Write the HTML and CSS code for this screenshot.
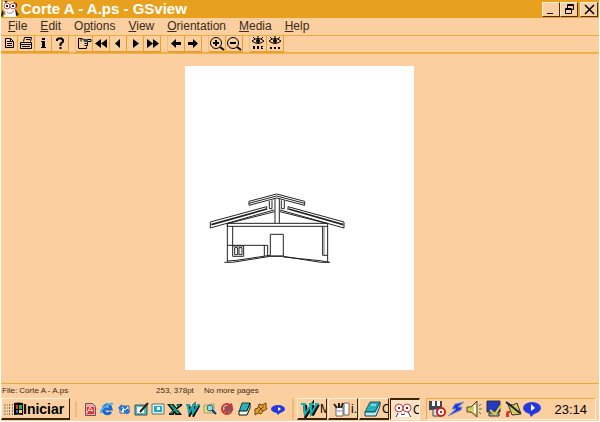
FILE: index.html
```
<!DOCTYPE html>
<html lang="pt">
<head>
  <meta charset="UTF-8">
  <title>Corte A - A.ps - GSview</title>
  <link rel="stylesheet" href="styles.css">
</head>
<body>

<div class="window">
  <header class="titlebar">
    <svg class="logo" viewBox="0 0 18 18">
      <path d="M2 1h4l3 1 4-1 2 3v6l2 4-2 3H3l1-5-2-4z" fill="#fff"/>
      <path d="M1 10l2 3-2 4-1-1zM14 8l4 7-3 1zM3 1h4L5 3zM12 1l4 3v4z" fill="#222"/>
      <circle cx="6" cy="6" r="3" fill="#fff" stroke="#d9533c"/>
      <circle cx="12" cy="6" r="3" fill="#fff" stroke="#d9533c"/>
      <path d="M5 5h2v2H5zM11 5h2v2h-2z" fill="#222"/>
      <path d="M6 12q3 3 7-1M4 11v4" fill="none" stroke="#b77"/>
    </svg>
    <h1>Corte A - A.ps - GSview</h1>
    <div class="controls">
      <button aria-label="Minimizar"><svg viewBox="0 0 16 13"><path d="M4 10.500h6" stroke="#000"/></svg></button>
      <button aria-label="Restaurar"><svg viewBox="0 0 16 13"><path d="M6.500 5V1.500h6v5H10M6 2.500h7M4.500 5.500h6v5h-6zM4 6.500h7" fill="none" stroke="#000"/></svg></button>
      <button class="close" aria-label="Fechar"><svg viewBox="0 0 16 13"><path d="M4 2l9 9M13 2l-9 9" stroke="#000" stroke-width="1.500"/></svg></button>
    </div>
  </header>

  <nav class="menu">
    <button><u>F</u>ile</button>
    <button><u>E</u>dit</button>
    <button>O<u>p</u>tions</button>
    <button><u>V</u>iew</button>
    <button><u>O</u>rientation</button>
    <button><u>M</u>edia</button>
    <button><u>H</u>elp</button>
  </nav>

  <div class="toolbar">
    <div class="group">
      <button aria-label="Open"><svg viewBox="0 0 16 15"><path d="M4.500 2.500h5l3 3v6h-8zM6 5.500h3M6 7.500h5M6 9.500h5M9.500 3v2.500H12" fill="none" stroke="#000"/></svg></button>
      <button aria-label="Print"><svg viewBox="0 0 16 15"><path d="M5.500 5.500l1-4h7l-1 4M2.500 6.500h11v6h-11zM3 8.500h10M4 10.500h8M8 3.500h4" fill="none" stroke="#000"/></svg></button>
      <button aria-label="Info"><svg viewBox="0 0 16 15"><path d="M7 2h3v2H7zM6 5h4v6h1v1H6v-1h1V6H6z"/></svg></button>
      <button aria-label="Help"><svg viewBox="0 0 16 15"><path d="M5 5V3.500L6.500 2.500h3L11 4v1.500L8.500 8v2M8.500 11v2" fill="none" stroke="#000" stroke-width="2"/></svg></button>
    </div>
    <div class="group">
      <button aria-label="Goto page"><svg viewBox="0 0 16 15"><path d="M5 2.500H2.500v10h8v-2M5 2.500l3 1h7v2h-5M11 7.500H8.500M11 9.500H8.500M11.500 5v5M5 2.500v3" fill="none" stroke="#000"/><path d="M7 3h5v3H8z" fill="#444"/></svg></button>
      <button aria-label="Back five"><svg viewBox="0 0 16 15"><path d="M8 3v9L2 7.500zM14 3v9L8 7.500z"/></svg></button>
      <button aria-label="Back"><svg viewBox="0 0 16 15"><path d="M10 3v9L5 7.500z"/></svg></button>
      <button aria-label="Next"><svg viewBox="0 0 16 15"><path d="M6 3v9l6-4.500z"/></svg></button>
      <button aria-label="Forward five"><svg viewBox="0 0 16 15"><path d="M3 3v9l6-4.500zM9 3v9l6-4.500z"/></svg></button>
    </div>
    <div class="group">
      <button aria-label="Go back"><svg viewBox="0 0 16 15"><path d="M3 7.500L8 3v3h5v3H8v3z"/></svg></button>
      <button aria-label="Go forward"><svg viewBox="0 0 16 15"><path d="M13 7.500L8 3v3H3v3h5v3z"/></svg></button>
    </div>
    <div class="group">
      <button aria-label="Zoom in"><svg viewBox="0 0 16 15"><circle cx="7" cy="7" r="5.500" fill="none" stroke="#000"/><path d="M4 7h6M7 4v6M11 11l4 3" stroke="#000" stroke-width="2"/></svg></button>
      <button aria-label="Zoom out"><svg viewBox="0 0 16 15"><circle cx="7" cy="7" r="5.500" fill="none" stroke="#000"/><path d="M4 7h6M11 11l4 3" stroke="#000" stroke-width="2"/></svg></button>
    </div>
    <div class="group">
      <button aria-label="Find"><svg viewBox="0 0 16 15"><path d="M2 5q6-5 12 0q-6 5-12 0M3 1l2 2M13 1l-2 2M8 0v2" fill="none" stroke="#000"/><circle cx="8" cy="5" r="2"/><path d="M3 10h2v3H3zM7 10h2v3H7zM11 10h2v1h-1v1h1v1h-2z"/></svg></button>
      <button aria-label="Find next"><svg viewBox="0 0 16 15"><path d="M2 5q6-5 12 0q-6 5-12 0M3 1l2 2M13 1l-2 2M8 0v2" fill="none" stroke="#000"/><circle cx="8" cy="5" r="2"/><path d="M3 11h2v2H3zM7 11h2v2H7zM11 11h2v2h-2z"/></svg></button>
    </div>
  </div>

  <main class="canvas">
    <svg class="page" viewBox="0 0 229 304" role="img" aria-label="Corte A">
      <g transform="translate(15 119) scale(.3333)" fill="none" stroke="#222" stroke-width="3">
        <!-- upper roof -->
        <path d="M147 61V49L230 27l84 22v12L230 39zM147 55L230 33l84 22"/>
        <path d="M208 48v23h8V46M244 46v25h9V47"/>
        <!-- main roof -->
        <path d="M200 65L31 111v18L222 75M264 65l168 46v18L240 75"/>
        <path d="M34 119L200 72M266 72l164 47" stroke-width="5"/>
        <path d="M82 116L224 80M240 80l143 36M200 65v10M264 65v10"/>
        <path d="M225 40v74M238 40v74"/>
        <!-- walls -->
        <path d="M82 115h301v9H82zM82 115v116M98 124v57M383 124v107M368 124v87h15"/>
        <path d="M372 124v87" stroke="#777"/>
        <path d="M211 213v-65h39v65z"/>
        <path d="M82 181h121v33M193 181v33M98 183h33v31H98zM104 188h9v21h-9zM117 188h9v21h-9z"/>
        <!-- floor -->
        <path d="M73 232h24l114-18h39l112 18h27M82 228l28-2 100-15M250 216l110 11 29 5"/>
      </g>
    </svg>
  </main>

  <footer class="status">
    <span class="file">File: Corte A - A.ps</span>
    <span class="coords">253, 378pt</span>
    <span>No more pages</span>
  </footer>
</div>

<div class="taskbar">
  <button class="start">
    <svg viewBox="0 0 20 16"><path d="M1 4h4M1 7h4M1 10h4M1 13h4M6.500 3v11M9.500 3v11" stroke="#777" stroke-dasharray="2 1"/><path d="M11 2q4-1 9 0v12q-5-1-9 0z"/><path d="M13 4h2v4h-2z" fill="#e33"/><path d="M16 4h3v4h-3z" fill="#2b4"/><path d="M13 9h2v3h-2z" fill="#36d"/><path d="M16 9h3v3h-3z" fill="#fd3"/></svg>
    Iniciar
  </button>

  <div class="launch">
    <button aria-label="Acrobat"><svg viewBox="0 0 16 16"><path d="M3.500 2.500h7l3 3v9h-10z" fill="#eaa" stroke="#655"/><path d="M5 6h7v7H5z" fill="#d33"/><path d="M5 12l3-6 3 4-5-1" fill="none" stroke="#fdd"/></svg></button>
    <button aria-label="Internet Explorer"><svg viewBox="0 0 16 16"><path d="M12 11q-3 3-6 1-3-3-1-6 3-4 6-1l1 3H5" fill="none" stroke="#1768d8" stroke-width="3"/><path d="M2 12q-1-3 5-7 5-3 7-2" fill="none" stroke="#49b5ed" stroke-width="2"/></svg></button>
    <button aria-label="Outlook"><svg viewBox="0 0 16 16"><path d="M4 5h9v7H4z" fill="#fff" stroke="#458"/><path d="M2 7l4-4v2h5v3H6v3zM14 10l-4 4v-2H8V9h2V6z" fill="#2679d8"/><path d="M6 6l3 3 3-3" fill="none" stroke="#fff"/></svg></button>
    <button aria-label="Desktop"><svg viewBox="0 0 16 16"><path d="M2 4h12v10H2z" fill="#5bb" stroke="#355"/><path d="M4 6h7v6H4z" fill="#fff"/><path d="M15 2l-8 9" stroke="#222" stroke-width="2"/></svg></button>
    <button aria-label="Monitor"><svg viewBox="0 0 16 16"><path d="M2 3h12v10H2z" fill="#dee" stroke="#577"/><path d="M4 5h8v6H4z" fill="#2aa5bb"/><path d="M7 6h3v3H7z" fill="#fff"/></svg></button>
    <button aria-label="Excel"><svg viewBox="0 0 16 16"><path d="M2 4h4l7 9h-4zM10 4h5M2 13h5M14 4L3 13" fill="#111" stroke="#111" stroke-width="2"/><path d="M3 4h2l7 8h-2zM9 4h4M3 12h3M12 4l-8 8" fill="#18a08c" stroke="#18a08c"/></svg></button>
    <button aria-label="Word"><svg viewBox="0 0 16 16"><path d="M4 5l1 8 4-7v7l5-9" fill="none" stroke="#111" stroke-width="3"/><path d="M1 4h4M7 4h3M12 4h3M3 4l1 8 4-7v7l5-8" fill="none" stroke="#11aab0" stroke-width="2"/></svg></button>
    <button aria-label="Pesquisar"><svg viewBox="0 0 16 16"><path d="M2 4h5l1-1h4v9H2z" fill="#eee36a" stroke="#998"/><circle cx="8" cy="7" r="3" fill="#8de" stroke="#267"/><path d="M10 9l4 4" stroke="#138" stroke-width="2"/></svg></button>
    <button aria-label="Bloqueio"><svg viewBox="0 0 16 16"><path d="M5 6l8-4 1 7-7 4z" fill="#667"/><circle cx="8" cy="8" r="5" fill="none" stroke="#d33232" stroke-width="2"/><path d="M4 11l9-7" stroke="#d33232" stroke-width="2"/></svg></button>
    <button aria-label="Bloco de notas"><svg viewBox="0 0 16 16"><path d="M6 2h8l-3 9H3z" fill="#20b5bd" stroke="#333"/><path d="M3 10h8l3-8v5l-3 7H3z" fill="#e8ffff" stroke="#111"/></svg></button>
    <button aria-label="Ferramenta"><svg viewBox="0 0 16 16"><path d="M2 8l3-1 1-4 3 1 4-2v4l1 2-4 2-2 3-3-1-3 2z" fill="#e0a020" stroke="#742"/><path d="M5 11l6-6M6 6l4 4" stroke="#643"/></svg></button>
    <button aria-label="Discador"><svg viewBox="0 0 16 16"><ellipse cx="8" cy="8" rx="7" ry="4" fill="#2538e0"/><path d="M6 11h5l-3 3z" fill="#2538e0"/><path d="M8 6l3 2-3 2z" fill="#fff"/></svg></button>
  </div>

  <div class="tasks">
    <button><svg viewBox="0 0 20 16"><path d="M5 4l1 10 6-9v9l6-11" fill="none" stroke="#111" stroke-width="4"/><path d="M1 3h5M9 3h5M15 3h4M4 3l1 10 6-9v9l6-10" fill="none" stroke="#12b3b5" stroke-width="2"/></svg><span>M</span></button>
    <button><svg viewBox="0 0 20 16"><path d="M5 6h7v9H5zM13 2h5v12h-5z" fill="#fff" stroke="#666"/><path d="M6 7L3 3M8 7V2M10 7l2-5" stroke="#222" stroke-width="2"/><path d="M6 10h5" stroke="#68c"/></svg><span>i.</span></button>
    <button><svg viewBox="0 0 20 16"><path d="M8 1h10l-5 10H3z" fill="#20b5bd" stroke="#355"/><path d="M3 11h10l5-10v4l-4 10H3z" fill="#b8ecec" stroke="#146"/><path d="M9 4h5" stroke="#dff"/></svg><span>C</span></button>
    <button class="active"><svg viewBox="0 0 20 16"><path d="M4 2h12l1 6 2 7H2l2-6z" fill="#fff"/><circle cx="6" cy="6" r="4" fill="#fff" stroke="#d33"/><circle cx="14" cy="6" r="4" fill="#fff" stroke="#d33"/><path d="M5 5h2v2H5zM13 5h2v2h-2z" fill="#722"/><path d="M5 11l-2 4M15 10l3 5M8 12q2 1 4 0" fill="none" stroke="#333"/></svg><span>C</span></button>
  </div>

  <div class="tray">
    <svg viewBox="0 0 18 18"><path d="M1 1h13v9H1z" fill="#445"/><path d="M4 1h3v5H4zM9 1h3v5H9z" fill="#fff"/><path d="M5 9h9v7H5z" fill="#ddd" stroke="#445"/><circle cx="13" cy="12" r="4" fill="#fff" stroke="#c22" stroke-width="2"/><path d="M12 11h2v2h-2z" fill="#c22"/></svg>
    <svg viewBox="0 0 18 18"><path d="M17 2L8 4 5 9h4l-8 7 13-6 1-3h-4z" fill="#2638dc" stroke="#79c"/></svg>
    <svg viewBox="0 0 18 18"><path d="M1 7h4l6-6v16l-6-5H1z" fill="#d8d050" stroke="#444"/><path d="M9 5v8" stroke="#fff" stroke-width="2"/><path d="M13 6l2-2M13 9h3M13 12l2 2" stroke="#665"/></svg>
    <svg viewBox="0 0 18 18"><path d="M2 1h13v11H2z" fill="#2638bd" stroke="#333"/><path d="M4 13h10v3H4z" fill="#aaa" stroke="#333"/><path d="M17 4l-7 10-5-4" fill="none" stroke="#e3d733" stroke-width="2"/></svg>
    <svg viewBox="0 0 18 18"><path d="M4 4l5 1 4-2 4 11-9 1z" fill="#d0ce62" stroke="#333"/><path d="M2 2l14 11" stroke="#222" stroke-width="2"/><path d="M3 11h3v2H5v4H2v-4z" fill="#e32"/></svg>
    <svg viewBox="0 0 18 18"><ellipse cx="9" cy="8" rx="9" ry="6" fill="#2538e0"/><path d="M6 13h6l-4 4z" fill="#2538e0"/><path d="M8 4l4 4-4 3z" fill="#fff"/></svg>
    <time>23:14</time>
  </div>
</div>

</body>
</html>
```

FILE: styles.css
```
* {
  box-sizing: border-box;
}

body {
  margin: 0;
  padding: 0 1px 1px;
  min-height: 100vh;
  display: flex;
  flex-direction: column;
  background: #fff;
  color: #3a2a1c;
  font-family: "Liberation Sans", Arial, sans-serif;
  font-size: 12px;
}

button {
  padding: 0;
  border: none;
  background: #fbcf9f;
  color: inherit;
  font: inherit;
}

svg {
  display: block;
  flex: none;
}

.window {
  flex: 1;
  display: flex;
  flex-direction: column;
  background: #fbcf9f;
}

.titlebar {
  display: flex;
  align-items: center;
  height: 18px;
  padding-right: 1px;
  background: #e8a11f;
}

.logo {
  width: 18px;
  height: 18px;
}

.titlebar h1 {
  flex: 1;
  margin: 0 0 0 2px;
  color: #fff;
  font-size: 15px;
  line-height: 18px;
}

.controls {
  display: flex;
}

.controls button {
  width: 18px;
  height: 15px;
  border: 1px solid #fff0d8;
  border-right-color: #4a2c08;
  border-bottom-color: #4a2c08;
}

.controls .close {
  margin-left: 2px;
}

.controls svg {
  width: 16px;
  height: 13px;
}

.menu {
  display: flex;
  gap: 13px;
  height: 18px;
  padding-left: 7px;
  border-bottom: 1px solid #eba93f;
}

.menu button {
  line-height: 17px;
}

.toolbar {
  display: flex;
  gap: 7px;
  height: 18px;
  border-bottom: 2px solid #f0b04c;
}

.group {
  display: flex;
}

.group + .group {
  border-left: 1px solid #f5be74;
  margin-left: -1px;
}

.toolbar button {
  width: 17px;
  height: 17px;
  border-right: 1px solid #eba02c;
  border-bottom: 2px solid #eba02c;
}

.toolbar svg {
  width: 16px;
  height: 15px;
}

.canvas {
  flex: 1;
  display: flex;
  justify-content: center;
  align-items: flex-start;
  padding: 12px 2px 12px 0;
}

.page {
  width: 229px;
  height: 304px;
  background: #fff;
}

.status {
  display: flex;
  height: 14px;
  padding-left: 1px;
  border-top: 1px solid #e8a83c;
  font-size: 8px;
  line-height: 14px;
}

.file {
  width: 154px;
}

.coords {
  width: 48px;
}

.taskbar {
  display: flex;
  align-items: center;
  height: 24px;
  background: #fbcf9f;
}

.start,
.tasks button {
  display: flex;
  align-items: center;
  height: 22px;
  border: 1px solid #fff0d8;
  border-right-color: #3c2408;
  border-bottom: 2px solid #3c2408;
}

.start {
  width: 69px;
  padding-left: 1px;
  color: #000;
  font-size: 14px;
  font-weight: bold;
}

.start svg {
  width: 20px;
  height: 16px;
}

.launch {
  display: flex;
  width: 217px;
  margin-left: 5px;
  padding: 0 5px 0 4px;
  border-left: 2px solid #f3bb70;
}

.launch button {
  flex: 1;
}

.launch svg {
  width: 16px;
  height: 16px;
  margin: 0 auto;
}

.tasks {
  display: flex;
  gap: 1px;
  padding-left: 3px;
  border-left: 2px solid #f3bb70;
}

.tasks button {
  width: 30px;
  overflow: hidden;
  color: #000;
  font-size: 12px;
}

.tasks svg {
  width: 20px;
  height: 18px;
  margin-left: 2px;
}

.tasks .active {
  border: 1px solid #fff0d8;
  border-top: 2px solid #3c2408;
  border-left-color: #3c2408;
  background: #fde2c4;
}

.tray {
  flex: 1;
  display: flex;
  align-items: center;
  height: 22px;
  margin: 0 3px 0 6px;
  border: 1px solid #fff0d8;
  border-top-color: #eba93f;
  border-left-color: #eba93f;
}

.tray svg {
  width: 18px;
  height: 18px;
  margin-left: 1px;
}

.tray time {
  margin: 0 8px 0 auto;
  color: #000;
  font-size: 13px;
}
```
